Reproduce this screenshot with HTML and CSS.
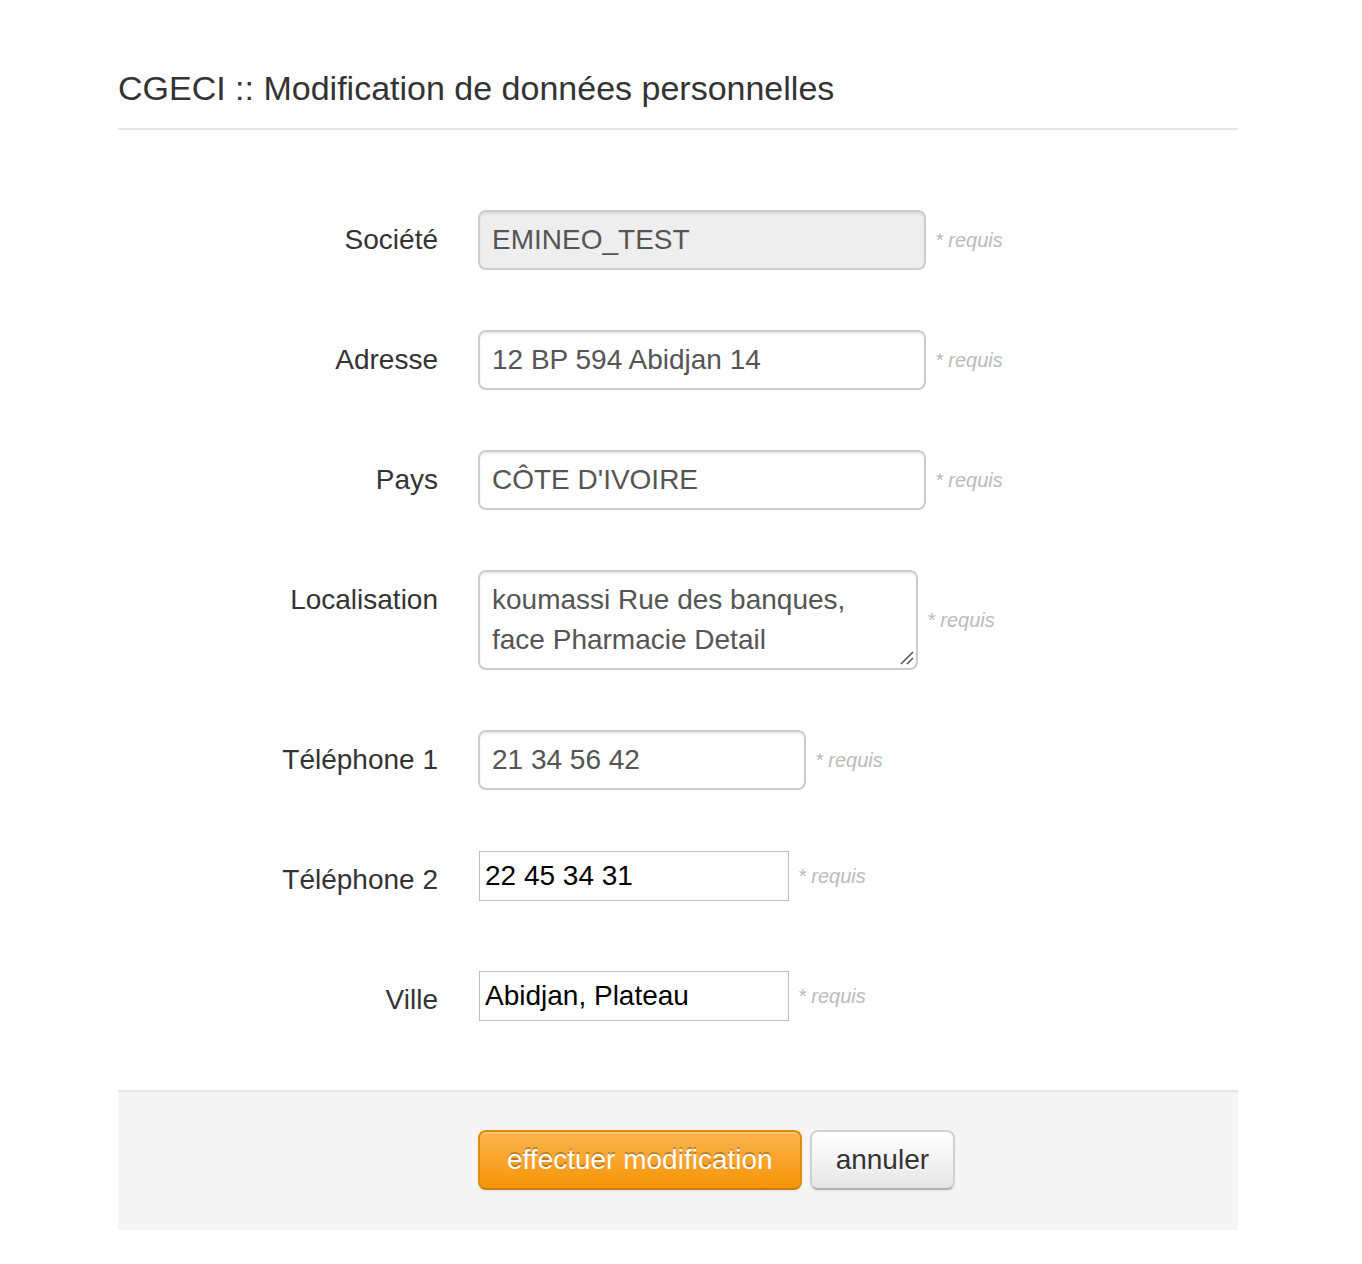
FILE: index.html
```html
<!DOCTYPE html>
<html lang="fr">
<head>
<meta charset="utf-8">
<title>CGECI :: Modification de données personnelles</title>
<link rel="stylesheet" href="styles.css">
</head>
<body>
<div class="container">
  <form class="form">
    <div class="legend">CGECI :: Modification de données personnelles</div>
    <div class="fields">
      <div class="row">
        <label class="label">Société</label>
        <div class="controls">
          <input class="field field-wide disabled" type="text" value="EMINEO_TEST" readonly>
          <span class="help">* requis</span>
        </div>
      </div>
      <div class="row">
        <label class="label">Adresse</label>
        <div class="controls">
          <input class="field field-wide" type="text" value="12 BP 594 Abidjan 14">
          <span class="help">* requis</span>
        </div>
      </div>
      <div class="row">
        <label class="label">Pays</label>
        <div class="controls">
          <input class="field field-wide" type="text" value="CÔTE D'IVOIRE">
          <span class="help">* requis</span>
        </div>
      </div>
      <div class="row">
        <label class="label">Localisation</label>
        <div class="controls">
          <span class="area-wrap">
            <textarea class="field area">koumassi Rue des banques, face Pharmacie Detail</textarea>
            <svg class="grip" width="14" height="14" viewBox="0 0 14 14" aria-hidden="true">
              <line x1="1" y1="13" x2="13" y2="1" stroke="#555" stroke-width="1.6"/>
              <line x1="7" y1="13" x2="13" y2="7" stroke="#555" stroke-width="1.6"/>
            </svg>
          </span>
          <span class="help">* requis</span>
        </div>
      </div>
      <div class="row">
        <label class="label">Téléphone 1</label>
        <div class="controls">
          <input class="field field-mid" type="text" value="21 34 56 42">
          <span class="help">* requis</span>
        </div>
      </div>
      <div class="row">
        <label class="label">Téléphone 2</label>
        <div class="controls controls-plain">
          <input class="plain" type="text" value="22 45 34 31">
          <span class="help">* requis</span>
        </div>
      </div>
      <div class="row">
        <label class="label">Ville</label>
        <div class="controls controls-plain">
          <input class="plain" type="text" value="Abidjan, Plateau">
          <span class="help">* requis</span>
        </div>
      </div>
    </div>
    <div class="actions">
      <button type="button" class="btn btn-warning">effectuer modification</button>
      <button type="button" class="btn btn-default">annuler</button>
    </div>
  </form>
</div>
</body>
</html>
```

FILE: styles.css
```css
html, body {
  margin: 0;
  padding: 0;
  background: #fff;
}

body {
  font-family: "Liberation Sans", Helvetica, Arial, sans-serif;
  color: #333;
}

.container {
  width: 1120px;
  margin-left: 118px;
}

.legend {
  margin-top: 48px;
  font-size: 34px;
  line-height: 80px;
  color: #333;
  border-bottom: 2px solid #e5e5e5;
  margin-bottom: 80px;
}

.row {
  display: flex;
  min-height: 60px;
  margin-bottom: 60px;
}

.label {
  width: 320px;
  flex: none;
  text-align: right;
  font-size: 28px;
  line-height: 40px;
  padding-top: 10px;
  color: #333;
}

.controls {
  margin-left: 40px;
  display: flex;
  align-items: center;
  align-self: flex-start;
}

.controls-plain {
  padding-top: 1px;
  margin-left: 41px;
}

.field {
  box-sizing: border-box;
  height: 60px;
  border: 2px solid #ccc;
  border-radius: 8px;
  padding: 8px 12px;
  font-family: "Liberation Sans", Helvetica, Arial, sans-serif;
  font-size: 28px;
  line-height: 40px;
  color: #555;
  background: #fff;
  box-shadow: inset 0 2px 2px rgba(0, 0, 0, 0.075);
  margin: 0;
  outline: none;
}

.field-wide {
  width: 448px;
}

.field-mid {
  width: 328px;
}

.disabled {
  background: #eee;
}

.area-wrap {
  position: relative;
  display: block;
}

.area {
  width: 440px;
  height: 100px;
  resize: none;
  overflow: hidden;
  display: block;
}

.grip {
  position: absolute;
  right: 4px;
  bottom: 5px;
}

.plain {
  box-sizing: border-box;
  width: 310px;
  height: 50px;
  border: 1px solid #bfbfbf;
  border-radius: 0;
  padding: 0 5px;
  font-family: "Liberation Sans", Helvetica, Arial, sans-serif;
  font-size: 28px;
  color: #000;
  background: #fff;
  margin: 0;
  outline: none;
}

.help {
  margin-left: 9px;
  font-size: 20px;
  font-style: italic;
  color: #bbb;
}

.actions {
  background: #f5f5f5;
  border-top: 2px solid #e5e5e5;
  padding: 38px 0 40px 360px;
  display: flex;
  gap: 8px;
}

.btn {
  box-sizing: border-box;
  height: 60px;
  padding: 0 24px;
  font-family: "Liberation Sans", Helvetica, Arial, sans-serif;
  font-size: 28px;
  line-height: 56px;
  border-radius: 8px;
  cursor: pointer;
}

.btn-warning {
  padding: 0 27px;
  color: #fff;
  text-shadow: 0 -2px 0 rgba(0, 0, 0, 0.25);
  background: linear-gradient(to bottom, #fbb450, #f89406);
  border: 2px solid #e08a0e;
  border-bottom-color: #c97d0e;
  box-shadow: inset 0 2px 0 rgba(255, 255, 255, 0.2), 0 2px 2px rgba(0, 0, 0, 0.05);
}

.btn-default {
  color: #333;
  text-shadow: 0 2px 2px rgba(255, 255, 255, 0.75);
  background: linear-gradient(to bottom, #fff, #e6e6e6);
  border: 2px solid #d0d0d0;
  border-bottom-color: #b3b3b3;
  box-shadow: inset 0 2px 0 rgba(255, 255, 255, 0.2), 0 2px 2px rgba(0, 0, 0, 0.05);
}
```
